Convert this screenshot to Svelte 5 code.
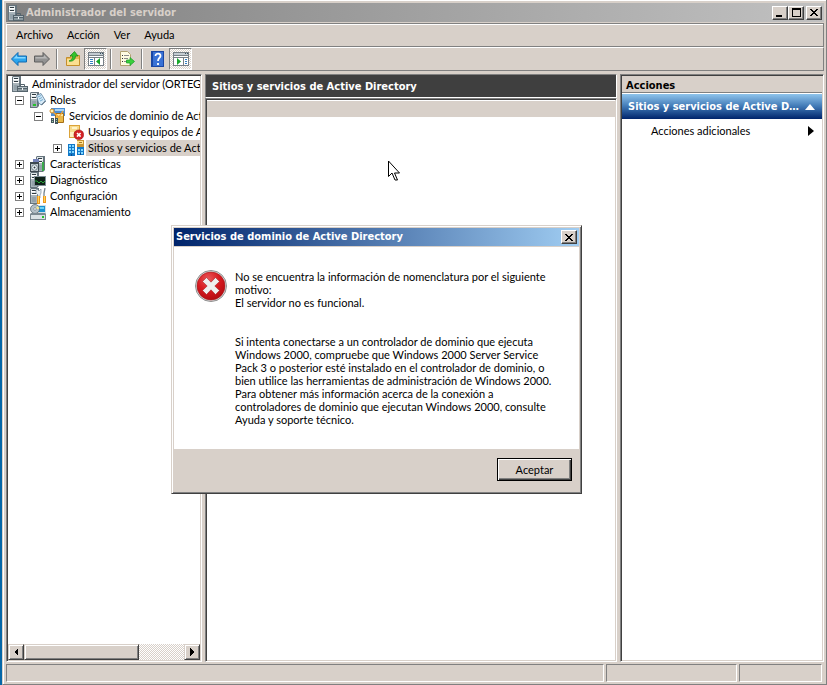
<script>
  const menus = ['Archivo', 'Acción', 'Ver', 'Ayuda'];
  const nodes = [
    { level: 0, icon: 'server', text: 'Administrador del servidor (ORTEGA)' },
    { level: 1, box: 'minus', icon: 'roles', text: 'Roles' },
    { level: 2, box: 'minus', icon: 'domain', text: 'Servicios de dominio de Active Directory' },
    { level: 3, icon: 'users', text: 'Usuarios y equipos de Active Directory' },
    { level: 3, box: 'plus', icon: 'sites', text: 'Sitios y servicios de Active Directory', selected: true },
    { level: 1, box: 'plus', icon: 'features', text: 'Características' },
    { level: 1, box: 'plus', icon: 'diagnostics', text: 'Diagnóstico' },
    { level: 1, box: 'plus', icon: 'config', text: 'Configuración' },
    { level: 1, box: 'plus', icon: 'storage', text: 'Almacenamiento' }
  ];
</script>

{#snippet tower()}
  <path d="M1 0h8v14l-2 2H0V1z" fill="#66747d" />
  <path d="M1 1h6v14H1z" fill="#a9b5bb" />
  <path d="M1 1h6v6H1z" fill="#dde4e7" />
  <path d="M2 2h4v1H2zM2 5h4v1H2z" fill="#2f3b42" />
  <path d="M1 3h6v1H1zM1 6h6v1H1z" fill="#fff" />
  <path d="M2 9h4v5H2z" fill="#94a2aa" />
{/snippet}

{#snippet icon(name)}
  <svg class="icon" width="16" height="16" viewBox="0 0 16 16" aria-hidden="true">
    {#if name === 'server'}
      {@render tower()}
      <path d="M5 10h11v6H5z" fill="#55646d" />
      <path d="M6 11h9v1H6z" fill="#b4c0c6" />
      <path d="M6 13h9v2H6z" fill="#8b999f" />
      <path d="M8.500 10V8.500h4V10" fill="none" stroke="#55646d" />
      <path d="M10 12h1v2h-1z" fill="#f4f7f8" />
    {:else if name === 'roles'}
      {@render tower()}
      <path d="M6.500 3.500L11 1.500l4.500 7.500-4 4-3-2z" fill="#d7eaf7" stroke="#567b99" stroke-width=".8" />
      <path d="M8 5l3-1.500M9 7l3-1.500M10 9l3-1.500" stroke="#6faad1" />
      <path d="M11.500 13l4-4" stroke="#40566a" />
      <path d="M3 12h3v2H3z" fill="#25c22c" />
    {:else if name === 'domain'}
      <path d="M2 0h14v8H2z" fill="#4d8ed3" />
      <path d="M6 1h9v2H6z" fill="#a6d3f6" />
      <path d="M6.500 5.500h8v9h-8z" fill="#e9b949" stroke="#a56f17" />
      <path d="M7 6h7v2H7z" fill="#ffe9a0" />
      <circle cx="3" cy="3" r="2" fill="#fff2b1" stroke="#d28a25" />
      <path d="M4.500 4.500L10 9l4-6" fill="none" stroke="#f0a536" stroke-width="1.300" />
      <path d="M2 10h3v5H2zM6 10h3v6H6z" fill="#44565e" />
      <path d="M3 11h1v1H3zM7 11h1v1H7zM3 13h1v1H3zM7 13h1v1H7z" fill="#a8d7ae" />
    {:else if name === 'users'}
      <path d="M1 1h11v13H1z" fill="#dba33a" />
      <path d="M2 2h9v6H2z" fill="#f8db8c" />
      <path d="M4 3h5v2H4z" fill="#fff4cb" />
      <path d="M2 8h4v5H2z" fill="#fff1c6" />
      <circle cx="10.800" cy="10.800" r="4.900" fill="#d42125" stroke="#931116" stroke-width=".5" />
      <path d="M9 9l3.600 3.600M12.600 9L9 12.600" stroke="#fff" stroke-width="1.600" />
    {:else if name === 'sites'}
      <path d="M0 4h7v12H0zM9 7h7v8H9z" fill="#1379c8" />
      <path d="M1 5h2v2H1zM4 5h2v2H4zM1 8h2v2H1zM4 8h2v2H4zM1 11h2v2H1zM4 11h2v2H4zM10 9h2v2h-2zM13 9h2v2h-2zM10 12h2v2h-2zM13 12h2v2h-2z" fill="#83d8ff" />
      <path d="M3 14h1v2H3zM12 13h1v2h-1z" fill="#0b4b8d" />
      <path d="M9 0h7v7H9z" fill="#ca9432" />
      <path d="M9 1h6v3H9z" fill="#ffe291" />
      <path d="M11 2h3v1h-3z" fill="#a87724" />
    {:else if name === 'features'}
      <g transform="translate(6 0)">{@render tower()}</g>
      <path d="M3 3h6v6H3z" fill="#7482b9" />
      <path d="M12 6h2v9h-2z" fill="#39a94a" />
      <path d="M0 6h9v10H0z" fill="#3d4951" />
      <path d="M1 8h7v7H1z" fill="#c4ced3" />
      <circle cx="4.500" cy="11.500" r="2.800" fill="#f5fbff" stroke="#6d7d86" />
      <circle cx="4.500" cy="11.500" r="1" fill="#26333a" />
    {:else if name === 'diagnostics'}
      {@render tower()}
      <path d="M4 4h12v10H4z" fill="#809098" />
      <path d="M5 5h10v8H5z" fill="#10221a" />
      <path d="M5 9h2l2 2 2-2 2 2 2-2" fill="none" stroke="#27a838" />
    {:else if name === 'config'}
      {@render tower()}
      <path d="M7 1l2 2 2-2v4l-1 2v3H8V7L6 5V2z" fill="#e7eef2" stroke="#7b8d98" stroke-width=".7" />
      <path d="M15 0l-1 5v4" fill="none" stroke="#75858e" stroke-width="1.300" />
      <path d="M7 8h3v8H7zM13 8h3v7h-3z" fill="#ef981b" />
      <path d="M8 8h1v7H8zM14 8h1v6h-1z" fill="#ffd459" />
    {:else if name === 'storage'}
      <path d="M6 1h10v9H6z" fill="#d6e0e5" />
      <path d="M8 2h7v6H8z" fill="#1c92cf" />
      <path d="M9 3h5v2H9z" fill="#6ed2f7" />
      <circle cx="5" cy="5" r="4.500" fill="#b5c1c8" stroke="#5a6b74" stroke-width=".8" />
      <path d="M5 5l3-3a4 4 0 0 1 1 3z" fill="#f7e98c" />
      <circle cx="5" cy="5" r="1.300" fill="#fff" stroke="#63727a" stroke-width=".6" />
      <path d="M1 9h14l1 1v6H0v-6z" fill="#7c8a92" />
      <path d="M1 11h14v4H1z" fill="#dce3e6" />
      <path d="M12 12h2v2h-2z" fill="#25c22c" />
    {:else if name === 'back'}
      <path d="M.5 8L7 1.500V5h8.500v6H7v3.500z" fill="#2ba5ee" stroke="#1269b0" stroke-linejoin="round" />
      <path d="M2.500 7.500L6 4v2h8.500v1.500z" fill="#86d8ff" />
    {:else if name === 'forward'}
      <path d="M15.500 8L9 1.500V5H.5v6H9v3.500z" fill="#929292" stroke="#5f5f5f" stroke-linejoin="round" />
      <path d="M13.500 7.500L10 4v2H1.500v1.500z" fill="#b7b7b7" />
    {:else if name === 'folder'}
      <path d="M1.500 6.500h4v-2h9v10h-13z" fill="#e8b95a" stroke="#c58e2b" />
      <path d="M2 8h12v6H2z" fill="#fbdf91" />
      <path d="M4 10c3-1 3.500-3 3.500-5H5L9.500.5 13 5h-2.500c0 3-2.500 6-6.500 5z" fill="#35c32c" stroke="#168817" stroke-width=".7" />
    {:else if name === 'list'}
      <path d="M1.500.5h7l3 3v11h-10z" fill="#fffbe2" stroke="#b2a273" />
      <path d="M3 4h1v1H3zM3 7h1v1H3zM3 10h1v1H3z" fill="#333" />
      <path d="M5 4h5v1H5zM5 7h4v1H5zM5 10h3v1H5z" fill="#8c8c8c" />
      <path d="M7.500 9H11V6.500l4.500 4-4.500 4V12H7.500z" fill="#3ccf3c" stroke="#139b24" stroke-width=".7" />
    {:else if name === 'help'}
      <path d="M1 0h13v16H1z" fill="#1a46a4" />
      <path d="M3 1h10v14H3z" fill="#3971d5" />
      <path d="M5.500 5c0-3.500 5.500-3 5 0-.3 2-2.500 2-2.500 5M8 12v2" fill="none" stroke="#fff" stroke-width="1.800" />
    {:else if name === 'treepane' || name === 'actionpane'}
      <path d="M0 1h16v14H0z" fill="#777f86" />
      <path d="M1 2h14v2H1z" fill="#c3cbd1" />
      <path d="M12 2h1v1h-1zM14 2h1v1h-1z" fill="#35505f" />
      <path d="M1 5h14v1H1zM1 7h14v7H1z" fill="#fff" />
      {#if name === 'treepane'}
        <path d="M6 6h1v9H6z" fill="#777f86" />
        <path d="M2 8h3v1H2zM2 10h3v1H2zM2 12h3v1H2z" fill="#327fc0" />
        <path d="M12 7v7l-4-3.500z" fill="#16a829" />
      {:else}
        <path d="M10 6h1v9h-1z" fill="#777f86" />
        <path d="M12 8h2v1h-2zM12 10h2v1h-2zM12 12h2v1h-2z" fill="#327fc0" />
        <path d="M4 7v7l4-3.500z" fill="#16a829" />
      {/if}
    {/if}
  </svg>
{/snippet}

{#snippet closeGlyph()}
  <svg width="8" height="7" viewBox="0 0 8 7" shape-rendering="crispEdges" aria-hidden="true">
    <path d="M0 0h2v1h1v1h2V1h1V0h2v1H7v1H6v1H5v1h1v1h1v1h1v1H6V6H5V5H3v1H2v1H0V6h1V5h1V4h1V3H2V2H1V1H0z" />
  </svg>
{/snippet}

<div class="desktop">
  <div class="window">
    <header class="titlebar">
      {@render icon('server')}
      <h1>Administrador del servidor</h1>
      <div class="controls">
        <button class="ctl" aria-label="Minimizar">
          <svg width="8" height="8" shape-rendering="crispEdges"><path d="M0 6h6v2H0z" /></svg>
        </button>
        <button class="ctl" aria-label="Maximizar">
          <svg width="9" height="9" shape-rendering="crispEdges"><path d="M0 0h9v9H0zM1 2v6h7V2z" fill-rule="evenodd" /></svg>
        </button>
        <button class="ctl last" aria-label="Cerrar">{@render closeGlyph()}</button>
      </div>
    </header>

    <nav class="band menubar">
      {#each menus as m}<button>{m}</button>{/each}
    </nav>

    <div class="band toolbar">
      <button aria-label="Atrás">{@render icon('back')}</button>
      <button aria-label="Adelante">{@render icon('forward')}</button>
      <i class="sep"></i>
      <button aria-label="Subir un nivel">{@render icon('folder')}</button>
      <button class="pressed" aria-label="Mostrar árbol">{@render icon('treepane')}</button>
      <i class="sep"></i>
      <button aria-label="Exportar lista">{@render icon('list')}</button>
      <i class="sep"></i>
      <button aria-label="Ayuda">{@render icon('help')}</button>
      <button class="pressed" aria-label="Mostrar acciones">{@render icon('actionpane')}</button>
    </div>

    <main class="panes">
      <section class="sunken tree">
        <ul>
          {#each nodes as n}
            <li class="level{n.level}" class:selected={n.selected}>
              {#if n.level > 0}
                <span class="slot">
                  {#if n.box}
                    <button class="box" class:plus={n.box === 'plus'} aria-label="Expandir o contraer"></button>
                  {/if}
                </span>
              {/if}
              {@render icon(n.icon)}
              <span class="label">{n.text}</span>
            </li>
          {/each}
        </ul>
        <div class="scroll">
          <button class="ctl-raised" aria-label="Desplazar a la izquierda">
            <svg width="4" height="8" viewBox="0 0 4 8" shape-rendering="crispEdges"><path d="M4 0v8L0 4z" /></svg>
          </button>
          <div class="thumb"></div>
          <div class="track"></div>
          <button class="ctl-raised" aria-label="Desplazar a la derecha">
            <svg width="4" height="8" viewBox="0 0 4 8" shape-rendering="crispEdges"><path d="M0 0v8l4-4z" /></svg>
          </button>
        </div>
      </section>

      <section class="center">
        <h2>Sitios y servicios de Active Directory</h2>
        <div class="sunken results"><div class="columns"></div></div>
      </section>

      <aside class="sunken actions">
        <h3>Acciones</h3>
        <button class="group">
          <span>Sitios y servicios de Active Directory</span>
          <svg width="10" height="6" viewBox="0 0 10 6"><path d="M0 6l5-6 5 6z" fill="#fff" /></svg>
        </button>
        <button class="more">
          <span>Acciones adicionales</span>
          <svg width="6" height="10" viewBox="0 0 6 10"><path d="M0 0l6 5-6 5z" /></svg>
        </button>
      </aside>
    </main>

    <footer class="status"><div></div><div></div><div></div></footer>
  </div>

  <svg class="cursor" width="13" height="21" viewBox="0 0 13 21" aria-hidden="true">
    <path d="M.5 1v15.500l3.500-3.500 3 7h2.500l-3-7H11.500z" fill="#fff" stroke="#000" />
  </svg>

  <div class="dialog" role="dialog" aria-labelledby="dlg-title">
    <header>
      <h2 id="dlg-title">Servicios de dominio de Active Directory</h2>
      <button class="ctl" aria-label="Cerrar">{@render closeGlyph()}</button>
    </header>
    <div class="message">
      <svg width="32" height="32" viewBox="0 0 32 32" aria-hidden="true">
        <defs>
          <radialGradient id="red" cx=".4" cy=".25" r=".8">
            <stop offset="0" stop-color="#e8585a" />
            <stop offset=".5" stop-color="#d81a20" />
            <stop offset="1" stop-color="#b00a10" />
          </radialGradient>
        </defs>
        <circle cx="16" cy="16" r="15.500" fill="#dedede" stroke="#8f8f8f" />
        <circle cx="16" cy="16" r="14" fill="url(#red)" stroke="#a3191c" stroke-width=".6" />
        <path d="M7.500 11.500L11.500 7.500l4.500 4.700L20.500 7.500l4 4-4.700 4.500 4.700 4.500-4 4-4.500-4.700-4.500 4.700-4-4 4.700-4.500z" fill="#efefef" stroke="#9c1518" stroke-width=".5" stroke-linejoin="round" />
      </svg>
      <div>
        <p>No se encuentra la información de nomenclatura por el siguiente<br />motivo:<br />El servidor no es funcional.</p>
        <p>Si intenta conectarse a un controlador de dominio que ejecuta<br />Windows 2000, compruebe que Windows 2000 Server Service<br />Pack 3 o posterior esté instalado en el controlador de dominio, o<br />bien utilice las herramientas de administración de Windows 2000.<br />Para obtener más información acerca de la conexión a<br />controladores de dominio que ejecutan Windows 2000, consulte<br />Ayuda y soporte técnico.</p>
      </div>
    </div>
    <div class="buttons"><button class="ok">Aceptar</button></div>
  </div>
</div>

<style>
  .desktop {
    --face: #d8d0c9;
    --shade: #808080;
    --deep: #404040;
    position: relative;
    box-sizing: border-box;
    min-height: 100vh;
    display: flex;
    padding-left: 2px;
    background: #0567a8;
    color: #000;
    font: 11px/16px Tahoma, Lato, "DejaVu Sans Condensed", sans-serif;
    overflow: hidden;
    white-space: nowrap;
  }
  .desktop :global(*) { box-sizing: border-box; }
  h1, h2, h3, p, ul { margin: 0; padding: 0; font-size: 11px; }
  h1, h2, h3, .group { font-family: Tahoma, "DejaVu Sans Condensed", "DejaVu Sans", sans-serif; }
  button { font: inherit; color: inherit; margin: 0; padding: 0; border: 0; background: none; }
  svg { display: block; flex: none; }

  .window {
    flex: 1;
    min-width: 0;
    display: flex;
    flex-direction: column;
    background: var(--face);
    border: solid;
    border-width: 0 1px 1px;
    border-color: var(--face) var(--shade) var(--shade) var(--face);
    box-shadow: inset 1px 1px #fff;
    padding: 3px 2px 2px 3px;
  }

  .titlebar {
    display: flex;
    align-items: center;
    gap: 2px;
    height: 19px;
    padding: 0 2px;
    background: linear-gradient(90deg, #808080, #c1c1c1);
    color: var(--face);
  }
  .controls { display: flex; margin-left: auto; }
  .ctl, .ctl-raised {
    display: flex;
    align-items: center;
    justify-content: center;
    width: 16px;
    height: 14px;
    color: #000;
    background: var(--face);
    border: 1px solid;
    border-color: #fff var(--deep) var(--deep) #fff;
    box-shadow: inset -1px -1px var(--shade);
  }
  .ctl.last { margin-left: 2px; }

  .band {
    display: flex;
    align-items: center;
    height: 24px;
    border: 1px solid;
    border-color: #fff var(--shade) var(--shade) #fff;
  }
  .menubar { margin-top: 1px; padding-left: 2px; border-top-color: var(--shade); box-shadow: inset 0 1px #fff; }
  .menubar button { padding: 0 7px; }
  .toolbar button { display: flex; align-items: center; justify-content: center; width: 23px; height: 22px; }
  .toolbar .pressed {
    border: 1px solid;
    border-color: var(--shade) #fff #fff var(--shade);
    background: repeating-conic-gradient(#fff 0 25%, var(--face) 0 50%) 0 0 / 2px 2px;
  }
  .sep { width: 2px; height: 20px; margin: 0 3px; border-left: 1px solid var(--shade); border-right: 1px solid #fff; }

  .panes { flex: 1; min-height: 0; display: flex; gap: 3px; margin-top: 3px; }
  .sunken {
    background: #fff;
    border: 1px solid;
    border-color: var(--shade) #fff #fff var(--shade);
    box-shadow: inset 1px 1px var(--deep), inset -1px -1px var(--face);
    padding: 1px;
  }
  .tree { width: 196px; flex: none; display: flex; flex-direction: column; overflow: hidden; }
  .tree ul { flex: 1; list-style: none; }
  .tree li { display: flex; align-items: center; height: 16px; overflow: hidden; }
  .level0 { padding-left: 4px; }
  .level1 { padding-left: 7px; }
  .level2 { padding-left: 26px; }
  .level3 { padding-left: 45px; }
  .slot { flex: none; width: 9px; margin-right: 6px; }
  .label { flex: 1; min-width: 0; overflow: hidden; margin-left: 2px; padding-left: 2px; }
  .selected .label { background: var(--face); }
  .box {
    display: block;
    width: 9px;
    height: 9px;
    border: 1px solid var(--shade);
    background: linear-gradient(#000, #000) center / 5px 1px no-repeat #fff;
  }
  .plus {
    background:
      linear-gradient(#000, #000) center / 5px 1px no-repeat,
      linear-gradient(#000, #000) center / 1px 5px no-repeat #fff;
  }
  .scroll { display: flex; height: 16px; flex: none; }
  .ctl-raised, .thumb {
    height: 16px;
    border-color: var(--face) var(--deep) var(--deep) var(--face);
    box-shadow: inset 1px 1px #fff, inset -1px -1px var(--shade);
  }
  .thumb { width: 60%; background: var(--face); border-style: solid; border-width: 1px; }
  .track { flex: 1; background: repeating-conic-gradient(#fff 0 25%, var(--face) 0 50%) 0 0 / 2px 2px; }

  .center { flex: 1; min-width: 0; display: flex; flex-direction: column; }
  .center h2 {
    height: 24px;
    padding-left: 6px;
    line-height: 24px;
    color: #fff;
    background: #3f3f3f;
    border: 1px solid;
    border-color: var(--shade) #fff #fff var(--shade);
  }
  .results { flex: 1; padding-top: 2px; }
  .columns { height: 16px; background: var(--face); }

  .actions { width: 204px; flex: none; }
  .actions h3 { height: 17px; padding-left: 4px; line-height: 19px; background: var(--face); border-bottom: 1px solid var(--shade); }
  .group {
    display: flex;
    align-items: center;
    gap: 4px;
    width: 100%;
    height: 25px;
    margin-top: 1px;
    padding: 0 7px 0 6px;
    color: #fff;
    font-weight: bold;
    background: linear-gradient(#8fc4ec, #3f78b5 50%, #00246b);
  }
  .group span { flex: 1; overflow: hidden; text-overflow: ellipsis; text-align: left; line-height: 18px; }
  .more { display: flex; align-items: center; justify-content: space-between; width: 100%; height: 24px; padding: 0 8px 0 29px; }

  .status { display: flex; gap: 2px; height: 18px; margin-top: 2px; padding-right: 2px; }
  .status div { border: 1px solid; border-color: var(--shade) #fff #fff var(--shade); }
  .status div:nth-child(1) { flex: 1; }
  .status div:nth-child(2) { width: 131px; }
  .status div:nth-child(3) { width: 83px; }

  .cursor { position: absolute; left: 388px; top: 160px; }

  .dialog {
    position: absolute;
    left: 171px;
    top: 225px;
    width: 411px;
    padding: 2px;
    background: var(--face);
    border: 1px solid;
    border-color: var(--face) var(--deep) var(--deep) var(--face);
    box-shadow: inset 1px 1px #fff, inset -1px -1px var(--shade);
  }
  .dialog header {
    display: flex;
    align-items: center;
    justify-content: space-between;
    height: 18px;
    padding: 0 2px;
    line-height: 18px;
    color: #fff;
    background: linear-gradient(90deg, #00246b, #a0cdf2);
  }
  .message {
    display: flex;
    gap: 8px;
    margin-top: 1px;
    padding: 23px 21px;
    background: #fff;
    line-height: 13px;
  }
  .message p + p { margin-top: 26px; }
  .buttons { display: flex; justify-content: flex-end; padding: 9px 7px 10px; }
  .ok {
    width: 75px;
    height: 23px;
    border: 1px solid #000;
    box-shadow: inset 1px 1px #fff, inset -1px -1px var(--deep), inset -2px -2px var(--shade);
  }
</style>
